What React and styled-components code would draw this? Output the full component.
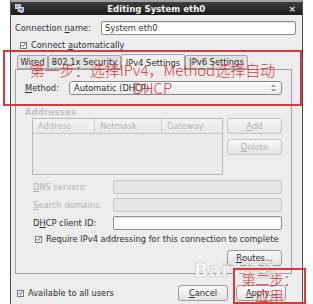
import React from "react";
import styled, { createGlobalStyle } from "styled-components";

const Global = createGlobalStyle`
  body { margin: 0; background: #fff; }
  * { box-sizing: border-box; }
`;

const ui = `"DejaVu Sans", "Liberation Sans", sans-serif`;
const cjk = `"Noto Sans CJK SC", "DejaVu Sans", sans-serif`;

const Stage = styled.div`
  position: relative;
  width: 313px;
  height: 304px;
  overflow: hidden;
  font-family: ${ui};
  font-size: 8.3px;
  color: #2e2e2e;
`;

const Window = styled.div`
  margin-left: 10px;
  width: 293px;
  height: 304px;
  border-top: 2px solid #a3a3a3;
  border-left: 1px solid #4d4d4d;
  border-right: 1px solid #4d4d4d;
  background: #ededed;
  display: flex;
  flex-direction: column;
`;

const TitleBar = styled.div`
  height: 13px;
  background: linear-gradient(#3e3e3e, #1c1c1c);
  display: flex;
  align-items: center;
  padding: 0 6px 0 4px;
  color: #f2f2f2;
`;

const Title = styled.div`
  flex: 1;
  text-align: center;
  font-weight: bold;
  font-size: 8.6px;
`;

const Close = styled.div`
  font-size: 9px;
  font-weight: bold;
  color: #ddd;
`;

const Body = styled.div`
  display: flex;
  flex-direction: column;
  padding: 3px 5px 0 4px;
`;

const FieldRow = styled.div`
  display: flex;
  align-items: center;
  height: 14px;
  margin-top: ${(p) => p.$top || 0}px;
  margin-right: ${(p) => p.$right || 0}px;
  padding-left: ${(p) => p.$indent || 0}px;
  color: ${(p) => (p.$off ? "#b3b3b3" : "#2e2e2e")};
`;

const Label = styled.div`
  width: ${(p) => p.$w}px;
  flex: none;
  white-space: nowrap;
`;

const Entry = styled.div`
  flex: 1;
  height: 14px;
  border: 1px solid ${(p) => (p.$off ? "#c6c6c6" : "#8d8d8d")};
  border-radius: 2px;
  background: ${(p) => (p.$off ? "#e6e6e6" : "#fff")};
  display: flex;
  align-items: center;
  padding-left: 3px;
  color: #333;
  box-shadow: ${(p) => (p.$off ? "none" : "inset 0 1px 1px rgba(0,0,0,0.12)")};
`;

const CheckRow = styled.div`
  display: flex;
  align-items: center;
  gap: 4px;
  height: 10px;
  margin-top: ${(p) => p.$top || 0}px;
  padding-left: ${(p) => p.$indent || 0}px;
  white-space: nowrap;
`;

const Box = styled.span`
  width: 7px;
  height: 7px;
  border: 1px solid #7a7a7a;
  background: #fff;
  display: inline-flex;
  align-items: center;
  justify-content: center;
`;

const U = styled.span`
  text-decoration: underline;
`;

const Tabs = styled.div`
  display: flex;
  align-items: flex-end;
  margin-top: 4px;
  padding-left: 2px;
  height: 15px;
`;

const Tab = styled.div`
  width: ${(p) => p.$w}px;
  height: ${(p) => (p.$active ? 16 : 14)}px;
  border: 1px solid #a5a5a5;
  border-bottom: ${(p) => (p.$active ? "none" : "1px solid #a5a5a5")};
  border-radius: 2px 2px 0 0;
  background: ${(p) => (p.$active ? "#f0f0f0" : "#e2e2e2")};
  display: flex;
  align-items: center;
  justify-content: center;
  white-space: nowrap;
  margin-bottom: ${(p) => (p.$active ? -1 : 0)}px;
  position: relative;
`;

const Panel = styled.div`
  height: 205px;
  margin-right: 5px;
  border: 1px solid #a0a0a0;
  background: #ededed;
  padding: 11px 9px 0 9px;
  display: flex;
  flex-direction: column;
`;

const Combo = styled.div`
  flex: 1;
  height: 14px;
  border: 1px solid #8a8a8a;
  border-radius: 3px;
  background: linear-gradient(#fdfdfd, #ececec);
  display: flex;
  align-items: center;
  justify-content: space-between;
  padding: 0 5px 0 4px;
`;

const Heading = styled.div`
  margin-top: 12px;
  height: 10px;
  font-weight: bold;
  color: #c3c3c3;
  letter-spacing: 0.3px;
`;

const AddrArea = styled.div`
  display: flex;
  gap: 4px;
  margin-top: 1px;
  padding-left: 7px;
`;

const Table = styled.div`
  width: 196px;
  height: 57px;
  border: 1px solid #b9b9b9;
  background: #ebebeb;
`;

const THead = styled.div`
  display: grid;
  grid-template-columns: 61px 67px 1fr;
  height: 15px;
  border-bottom: 1px solid #c4c4c4;
  background: linear-gradient(#f4f4f4, #e8e8e8);
  color: #b6b6b6;
`;

const TH = styled.div`
  display: flex;
  align-items: center;
  padding-left: 5px;
  border-left: ${(p) => (p.$first ? "none" : "1px solid #cfcfcf")};
`;

const SideButtons = styled.div`
  display: flex;
  flex-direction: column;
  gap: 5px;
`;

const Button = styled.div`
  width: ${(p) => p.$w || 55}px;
  height: 16px;
  border: 1px solid ${(p) => (p.$off ? "#c4c4c4" : "#9a9a9a")};
  border-radius: 3px;
  background: linear-gradient(#f9f9f9, #e3e3e3);
  display: flex;
  align-items: center;
  justify-content: center;
  color: ${(p) => (p.$off ? "#b3b3b3" : "#2e2e2e")};
`;

const RightSide = styled.div`
  display: flex;
  justify-content: flex-end;
  margin-top: 6px;
`;

const Footer = styled.div`
  display: flex;
  align-items: center;
  margin-top: 11px;
  padding: 0 11px 0 2px;
  gap: 8px;
`;

const Spacer = styled.div`
  flex: 1;
`;

const Note = styled.div`
  position: absolute;
  left: ${(p) => p.$x}px;
  top: ${(p) => p.$y}px;
  width: ${(p) => p.$w}px;
  height: ${(p) => p.$h}px;
  border: 2px solid #d63a3a;
  font-family: ${cjk};
  font-weight: 300;
  color: #df3434;
  text-align: center;
  font-size: ${(p) => p.$size}px;
  line-height: ${(p) => p.$lh}px;
  padding-top: ${(p) => p.$pad}px;
  white-space: nowrap;
`;

const Watermark = styled.div`
  position: absolute;
  left: 194px;
  top: 258px;
  display: flex;
  align-items: center;
  gap: 1px;
  font-family: "DejaVu Sans", ${cjk};
  font-weight: bold;
  color: rgba(255, 255, 255, 0.9);
  -webkit-text-stroke: 0.6px #c4c4c4;
`;

const WmLatin = styled.span`
  font-size: 19px;
`;

const WmCjk = styled.span`
  font-size: 16px;
`;

const Check = () => (
  <Box>
    <svg width="6" height="6" viewBox="0 0 6 6">
      <path d="M0.8 3.2 L2.4 4.8 L5.3 1" stroke="#333" strokeWidth="1" fill="none" />
    </svg>
  </Box>
);

const NetIcon = () => (
  <svg width="9" height="9" viewBox="0 0 9 9">
    <rect x="0.5" y="0.5" width="5" height="4" fill="#9fb6d3" stroke="#ddd" strokeWidth="0.8" />
    <rect x="3.5" y="3.5" width="5" height="4" fill="#7f9cc4" stroke="#eee" strokeWidth="0.8" />
    <path d="M2 6.5 h2 M5 8.5 h3" stroke="#ccc" strokeWidth="0.8" />
  </svg>
);

const Arrows = () => (
  <svg width="5" height="8" viewBox="0 0 5 8">
    <path d="M0.7 3 L2.5 1 L4.3 3 M0.7 5 L2.5 7 L4.3 5" stroke="#444" strokeWidth="0.9" fill="none" />
  </svg>
);

const Paw = () => (
  <svg width="14" height="16" viewBox="0 0 14 16">
    <g fill="rgba(255,255,255,0.9)" stroke="#c4c4c4" strokeWidth="0.6">
      <ellipse cx="3" cy="6" rx="1.8" ry="2.3" />
      <ellipse cx="6" cy="3" rx="1.8" ry="2.3" />
      <ellipse cx="9.5" cy="3.5" rx="1.8" ry="2.3" />
      <ellipse cx="11.8" cy="7" rx="1.7" ry="2.2" />
      <path d="M3.5 12 C4 8.5 9.5 8.5 10.5 12 C11 14.5 3 14.5 3.5 12 Z" />
    </g>
  </svg>
);

export default function App() {
  return (
    <Stage>
      <Global />
      <Window>
        <TitleBar>
          <NetIcon />
          <Title>Editing System eth0</Title>
          <Close>×</Close>
        </TitleBar>
        <Body>
          <FieldRow $top={3} $right={1}>
            <Label $w={86}>Connection <U>n</U>ame:</Label>
            <Entry>System eth0</Entry>
          </FieldRow>
          <CheckRow $top={5} $indent={5}>
            <Check />
            <span>Connect <U>a</U>utomatically</span>
          </CheckRow>
          <Tabs>
            <Tab $w={31}>Wired</Tab>
            <Tab $w={73}>802.1x Security</Tab>
            <Tab $w={64} $active>IPv4 Settings</Tab>
            <Tab $w={63}>IPv6 Settings</Tab>
          </Tabs>
          <Panel>
            <FieldRow>
              <Label $w={44}><U>M</U>ethod:</Label>
              <Combo>
                <span>Automatic (DHCP)</span>
                <Arrows />
              </Combo>
            </FieldRow>
            <Heading>Addresses</Heading>
            <AddrArea>
              <Table>
                <THead>
                  <TH $first>Address</TH>
                  <TH>Netmask</TH>
                  <TH>Gateway</TH>
                </THead>
              </Table>
              <SideButtons>
                <Button $off><U>A</U>dd</Button>
                <Button $off><U>D</U>elete</Button>
              </SideButtons>
            </AddrArea>
            <FieldRow $top={5} $indent={8} $off>
              <Label $w={80}><U>D</U>NS servers:</Label>
              <Entry $off />
            </FieldRow>
            <FieldRow $top={4} $indent={8} $off>
              <Label $w={80}><U>S</U>earch domains:</Label>
              <Entry $off />
            </FieldRow>
            <FieldRow $top={4} $indent={8}>
              <Label $w={80}>D<U>H</U>CP client ID:</Label>
              <Entry />
            </FieldRow>
            <CheckRow $top={4} $indent={10}>
              <Check />
              <span>Require IPv4 addressing for this connection to complete</span>
            </CheckRow>
            <RightSide>
              <Button><U>R</U>outes...</Button>
            </RightSide>
          </Panel>
          <Footer>
            <CheckRow>
              <Check />
              <span>Available to all users</span>
            </CheckRow>
            <Spacer />
            <Button $w={50}><U>C</U>ancel</Button>
            <Button $w={50}><U>A</U>pply...</Button>
          </Footer>
        </Body>
      </Window>
      <Watermark>
        <WmLatin>Bai</WmLatin>
        <Paw />
        <WmCjk>经验</WmCjk>
      </Watermark>
      <Note $x={3} $y={50} $w={299} $h={56} $size={15} $lh={18} $pad={9}>
        第一步：选择IPv4，Method选择自动
        <br />
        DHCP
      </Note>
      <Note $x={233} $y={268} $w={73} $h={36} $size={14} $lh={16} $pad={1}>
        第二步：<br />应用
      </Note>
    </Stage>
  );
}
